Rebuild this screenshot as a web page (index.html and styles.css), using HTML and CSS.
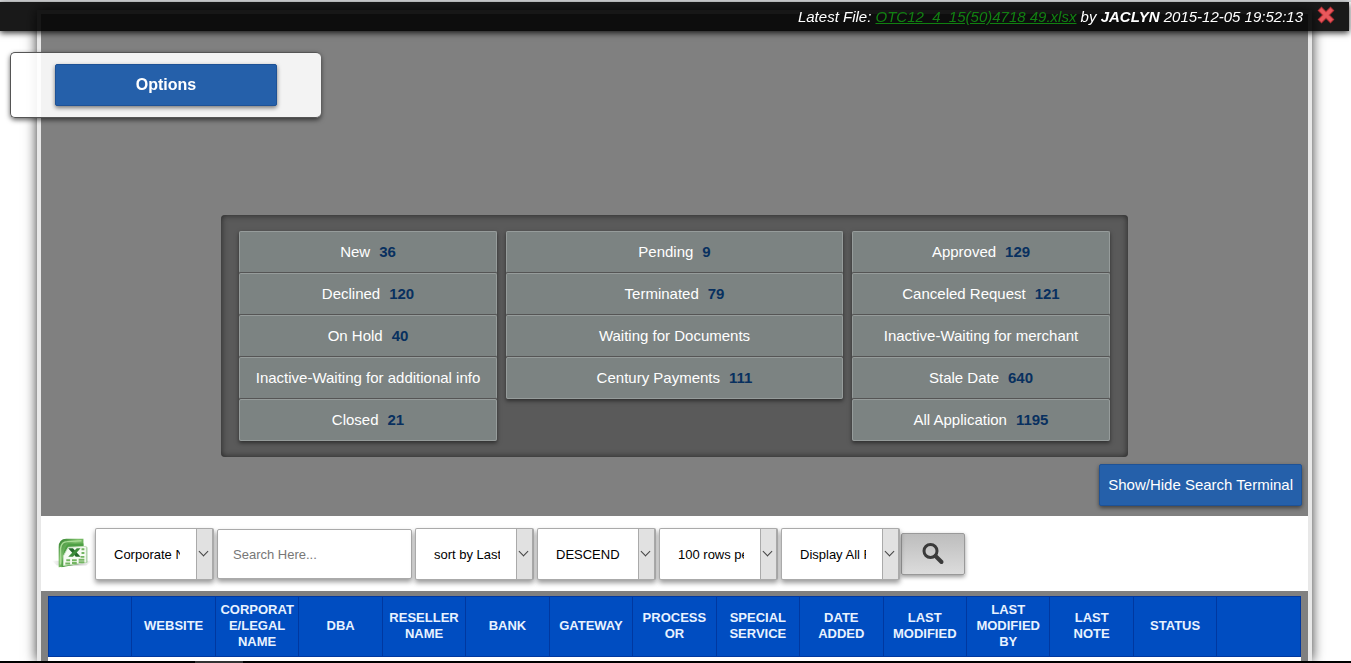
FILE: index.html
```html
<!DOCTYPE html>
<html lang="en">
<head>
<meta charset="utf-8">
<title>Applications</title>
<link rel="stylesheet" href="styles.css">
</head>
<body>
<header class="topbar">
  <p class="latest">Latest File: <a href="#">OTC12_4_15(50)4718 49.xlsx</a> by <b>JACLYN</b> 2015-12-05 19:52:13</p>
  <button class="close" type="button" aria-label="Close">
    <svg width="18" height="18" viewBox="0 0 18 18"><path d="M4.500 4.500 13.500 13.500M13.500 4.500 4.500 13.500" stroke="#b93238" stroke-width="5.500" stroke-linecap="square"/><path d="M4.500 4.500 13.500 13.500M13.500 4.500 4.500 13.500" stroke="#e8585c" stroke-width="3.500" stroke-linecap="square"/></svg>
  </button>
</header>

<aside class="options"><button class="btn btn-options" type="button">Options</button></aside>

<main class="page">
  <section class="summary">
    <div class="panel">
      <div class="column">
        <button type="button">New<b>36</b></button>
        <button type="button">Declined<b>120</b></button>
        <button type="button">On Hold<b>40</b></button>
        <button type="button">Inactive-Waiting for additional info</button>
        <button type="button">Closed<b>21</b></button>
      </div>
      <div class="column">
        <button type="button">Pending<b>9</b></button>
        <button type="button">Terminated<b>79</b></button>
        <button type="button">Waiting for Documents</button>
        <button type="button">Century Payments<b>111</b></button>
      </div>
      <div class="column">
        <button type="button">Approved<b>129</b></button>
        <button type="button">Canceled Request<b>121</b></button>
        <button type="button">Inactive-Waiting for merchant</button>
        <button type="button">Stale Date<b>640</b></button>
        <button type="button">All Application<b>1195</b></button>
      </div>
    </div>
    <button class="btn btn-toggle" type="button">Show/Hide Search Terminal</button>
  </section>

  <form class="toolbar">
    <a class="excel" href="#" aria-label="Export to Excel">
      <svg width="42" height="36" viewBox="0 0 42 36">
        <defs>
          <linearGradient id="green" x1="0" y1="0" x2="1" y2="1"><stop offset="0" stop-color="#2f7f2c"/><stop offset=".4" stop-color="#7fc06c"/><stop offset="1" stop-color="#2f8a2a"/></linearGradient>
          <linearGradient id="floor" x1="0" y1="0" x2="1" y2="0"><stop offset="0" stop-color="#fff"/><stop offset=".5" stop-color="#aaa"/><stop offset="1" stop-color="#fff"/></linearGradient>
        </defs>
        <path d="M0 25H42L36 30H5Z" fill="url(#floor)"/>
        <path d="M7 11Q7 2 15 2L33 2V10H17Q13 10 13 14V31L7 32Z" fill="url(#green)"/>
        <path d="M9 29V12Q10 5 16 5L31 4" fill="none" stroke="#a9dc96" stroke-width="1.500"/>
        <path d="M13 12 17 7H33V10L37 11V27L10 32V29Z" fill="#4ea044"/>
        <path d="M17 11 36 10V27L12 30V20Z" fill="#f6fbf3" stroke="#c9dfc2"/>
        <path d="M17 12H22L30 21H25Z" fill="#23682a"/><path d="M26 12H30L22 21H17Z" fill="#3c8c3a"/>
        <path d="M31 13H34M31 17H34M30 21H34M15 24.500H19M21 24.500H26M28 24H34M14 28H19M21 27.500H26M28 26.500H34" stroke="#74b562" stroke-width="2"/>
      </svg>
    </a>
    <span class="select"><select aria-label="Search field"><option>Corporate Name</option></select></span>
    <input class="search" type="text" placeholder="Search Here..." aria-label="Search">
    <span class="select"><select aria-label="Sort by"><option>sort by Last Modified</option></select></span>
    <span class="select"><select aria-label="Direction"><option>DESCEND</option></select></span>
    <span class="select"><select aria-label="Rows"><option>100 rows per page</option></select></span>
    <span class="select"><select aria-label="Display"><option>Display All Fields</option></select></span>
    <button class="go" type="submit" aria-label="Search">
      <svg width="24" height="24" viewBox="0 0 24 24" fill="none" stroke="#3a3a3a"><circle cx="9.500" cy="9" r="6.500" stroke-width="3"/><path d="M14.500 14 20.500 20" stroke-width="4" stroke-linecap="round"/></svg>
    </button>
  </form>

  <div class="results">
    <table>
      <thead>
        <tr><th></th><th>WEBSITE</th><th>CORPORATE/LEGAL NAME</th><th>DBA</th><th>RESELLER NAME</th><th>BANK</th><th>GATEWAY</th><th>PROCESS<wbr>OR</th><th>SPECIAL SERVICE</th><th>DATE ADDED</th><th>LAST MODIFIED</th><th>LAST MODIFIED BY</th><th>LAST<br>NOTE</th><th>STATUS</th><th></th></tr>
      </thead>
    </table>
    <div class="rows"></div>
  </div>
</main>
<footer class="strip"><span></span></footer>
</body>
</html>
```
FILE: styles.css
```css
* { box-sizing: border-box; }
body {
  margin: 0;
  height: 100vh;
  display: flex;
  flex-direction: column;
  overflow: hidden;
  background: #fff;
  font-family: "Liberation Sans", Arial, sans-serif;
  font-size: 15px;
  border-top: 2px solid #d9dbdd;
}
button, input, select { font-family: inherit; margin: 0; }
button { cursor: pointer; }

.topbar {
  position: fixed;
  top: 2px;
  left: 0;
  right: 2px;
  z-index: 2;
  height: 29px;
  padding-right: 14px;
  display: flex;
  justify-content: flex-end;
  align-items: center;
  gap: 14px;
  background: rgba(0, 0, 0, .9);
  box-shadow: 0 2px 6px rgba(0, 0, 0, .8);
  color: #fff;
}
.latest { margin: 0; font-style: italic; }
.latest a { color: #118011; }
.close { display: flex; padding: 0 0 4px; border: 0; background: none; }

.options {
  position: fixed;
  top: 52px;
  left: 10px;
  z-index: 2;
  padding: 11px 44px;
  border: 1px solid #555;
  border-right: 0;
  border-radius: 5px;
  background: rgba(255, 255, 255, .9);
  box-shadow: 0 2px 5px rgba(0, 0, 0, .6);
}
.btn {
  height: 42px;
  padding: 0 8px 2px;
  border: 1px solid #1e5296;
  border-radius: 2px;
  background: #2560aa;
  color: #fff;
  font-size: 15px;
  box-shadow: 0 2px 4px rgba(0, 0, 0, .5);
}
.btn-options { display: block; width: 222px; padding: 0; font-size: 16px; font-weight: bold; }

.page {
  flex: 1;
  min-height: 0;
  margin: 8px 39px 0 37px;
  display: flex;
  flex-direction: column;
  border: 4px solid #e8e8e8;
  border-bottom: 0;
  background: #808080;
  box-shadow: 0 0 12px rgba(0, 0, 0, .8);
}
.summary {
  display: flex;
  flex-direction: column;
  align-items: center;
  padding: 201px 6px 10px;
}
.panel {
  width: 100%;
  max-width: 907px;
  display: grid;
  grid-template-columns: 258fr 337fr 258fr;
  gap: 9px;
  align-items: start;
  padding: 16px 18px;
  border-radius: 4px;
  background: #5a5a5a;
  box-shadow: inset 0 0 6px #222;
}
.column { display: flex; flex-direction: column; box-shadow: 0 2px 4px rgba(0, 0, 0, .5); }
.column button {
  height: 42px;
  padding: 0 0 2px;
  border: 1px solid #969c9b;
  border-bottom-color: #555;
  border-radius: 2px;
  background: #7c8382;
  color: #fff;
  font-size: 15px;
}
.column button:last-child { border-bottom-color: #969c9b; }
.column b { margin-left: 9px; color: #08305f; }
.btn-toggle { align-self: flex-end; margin-top: 7px; }

.toolbar {
  display: flex;
  align-items: center;
  gap: 3px;
  height: 75px;
  flex: none;
  padding: 0 11px;
  background: #fff;
}
.excel { display: flex; width: 40px; }
.select { position: relative; display: block; }
.select::after {
  content: "";
  position: absolute;
  top: 20px;
  right: 7px;
  width: 6px;
  height: 6px;
  border: solid #444;
  border-width: 0 1px 1px 0;
  transform: rotate(45deg);
}
select {
  appearance: none;
  display: block;
  width: 119px;
  height: 52px;
  padding: 1px 32px 0 18px;
  border: 1px solid #aaa;
  border-right-width: 2px;
  border-radius: 2px;
  background: linear-gradient(90deg, #aaa 1px, #e1e1e1 1px) right / 16px 100% no-repeat #fff;
  color: #000;
  font-size: 13px;
  text-overflow: clip;
  box-shadow: 0 3px 5px rgba(0, 0, 0, .4);
}
.search {
  width: 195px;
  height: 50px;
  padding: 1px 15px 0;
  border: 1px solid #aaa;
  border-radius: 2px;
  font-size: 13px;
  box-shadow: 0 3px 5px rgba(0, 0, 0, .4);
}
.search::placeholder { color: #777; }
.go {
  display: flex;
  align-items: center;
  justify-content: center;
  width: 64px;
  height: 42px;
  margin-left: -2px;
  padding: 0;
  border: 1px solid #999;
  border-radius: 2px;
  background: linear-gradient(#bdbdbd, #dcdcdc);
  box-shadow: 0 2px 4px rgba(0, 0, 0, .4);
}

.results { flex: 1; display: flex; flex-direction: column; padding: 5px 7px 0; }
table { width: 100%; table-layout: fixed; border-collapse: collapse; }
th {
  height: 60px;
  padding: 4px 3px 5px;
  border: 1px solid #0038a0;
  background: #004dc1;
  color: #e8f2ff;
  font-size: 13px;
  line-height: 16px;
  overflow-wrap: break-word;
}
.rows { flex: 1; background: #fff; }
.strip { flex: none; height: 2px; padding-left: 195px; background: #000; }
.strip span { display: block; width: 48px; height: 2px; background: #333; }
```
